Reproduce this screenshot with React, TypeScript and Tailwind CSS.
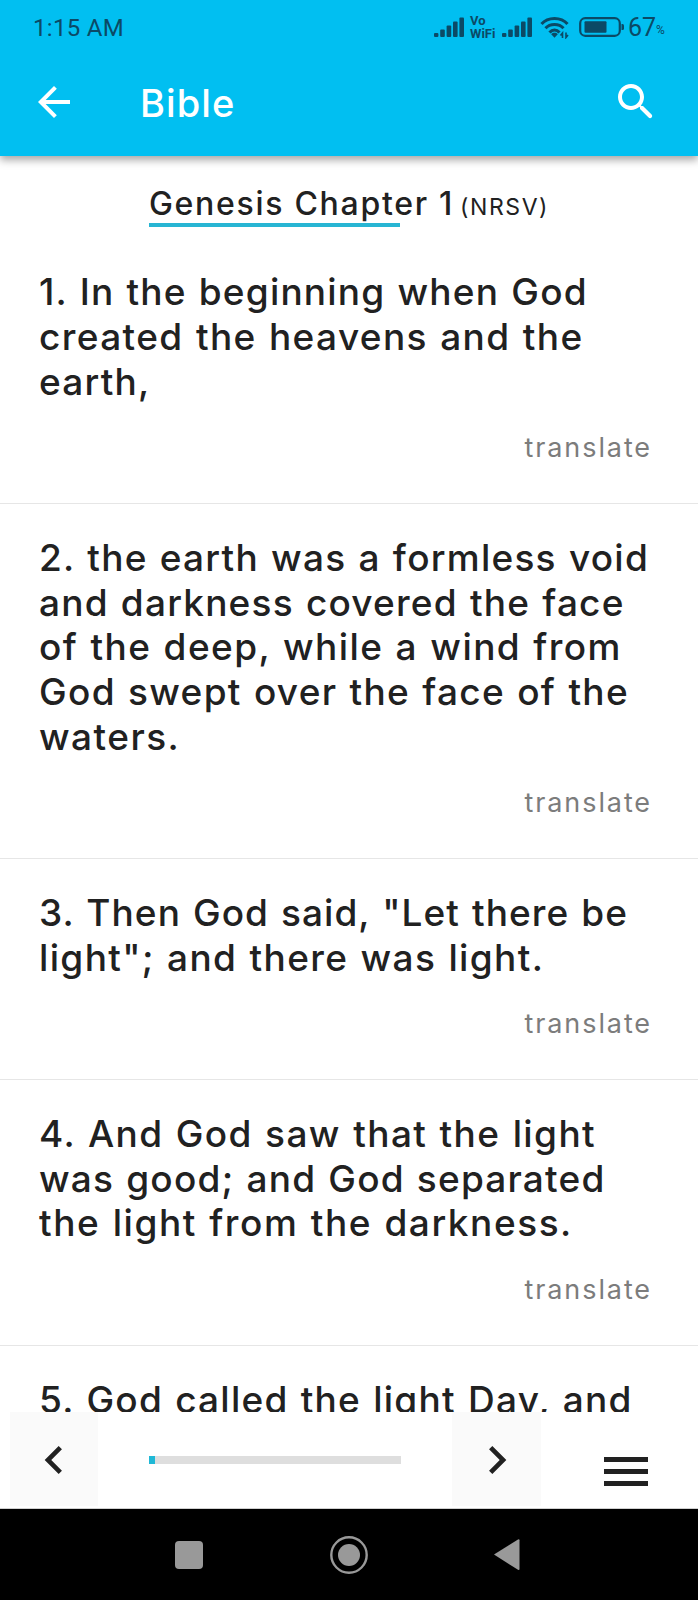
const verses = [
  {
    id: 1,
    lines: [
      { text: "1. In the beginning when God", tracking: "tracking-[1.2px]" },
      { text: "created the heavens and the", tracking: "tracking-[1.39px]" },
      { text: "earth,", tracking: "tracking-[1.2px]" },
    ],
  },
  {
    id: 2,
    lines: [
      { text: "2. the earth was a formless void", tracking: "tracking-[1.25px]" },
      { text: "and darkness covered the face", tracking: "tracking-[1.21px]" },
      { text: "of the deep, while a wind from", tracking: "tracking-[1.41px]" },
      { text: "God swept over the face of the", tracking: "tracking-[1.31px]" },
      { text: "waters.", tracking: "tracking-[1.44px]" },
    ],
  },
  {
    id: 3,
    lines: [
      { text: '3. Then God said, "Let there be', tracking: "tracking-[1.07px]" },
      { text: 'light"; and there was light.', tracking: "tracking-[1.36px]" },
    ],
  },
  {
    id: 4,
    lines: [
      { text: "4. And God saw that the light", tracking: "tracking-[1.4px]" },
      { text: "was good; and God separated", tracking: "tracking-[1.2px]" },
      { text: "the light from the darkness.", tracking: "tracking-[1.55px]" },
    ],
  },
  {
    id: 5,
    lines: [{ text: "5. God called the light Day, and", tracking: "tracking-[1.25px]" }],
  },
];

type Line = { text: string; tracking: string };

function SignalIcon() {
  return (
    <svg width="30" height="20" viewBox="0 0 30 20" fill="currentColor">
      <rect x="0" y="16" width="4.4" height="4" rx="1" />
      <rect x="6.2" y="12.5" width="4.6" height="7.5" rx="1" />
      <rect x="12.6" y="8.5" width="4.6" height="11.5" rx="1" />
      <rect x="19" y="4.5" width="4.6" height="15.5" rx="1" />
      <rect x="25.4" y="0.5" width="4.6" height="19.5" rx="1" />
    </svg>
  );
}

function WifiIcon() {
  return (
    <svg width="30" height="23" viewBox="0 0 30 23" fill="none" stroke="currentColor" strokeWidth="3">
      <path d="M1.5 8 C8 0.5 21 0.5 27.5 8" />
      <path d="M5.5 12.3 C10 7.2 19 7.2 23.5 12.3" />
      <path d="M9.5 16.5 C12.5 13 16.5 13 19.5 16.5" />
      <path d="M11.2 18.2 C13 16.3 16 16.3 17.8 18.2 L14.5 21.8 Z" fill="currentColor" stroke="none" />
      <path d="M22.5 22 V17 L20.5 19.5 M26 16.5 V21.5 L28 19" strokeWidth="1.6" />
    </svg>
  );
}

function BatteryIcon() {
  return (
    <svg width="46" height="20" viewBox="0 0 46 20" fill="none">
      <rect x="1.2" y="1.2" width="39.6" height="17.6" rx="5" stroke="currentColor" strokeWidth="2.2" />
      <rect x="5.5" y="4.2" width="22" height="11.6" rx="1" fill="currentColor" />
      <path d="M42.5 7 h1 q1.5 0 1.5 1.5 v3 q0 1.5 -1.5 1.5 h-1 z" fill="currentColor" />
    </svg>
  );
}

function StatusBar() {
  return (
    <div className="flex h-[54px] items-center pl-[33px] font-[Roboto,sans-serif] text-[#0b4a66]">
      <span className="w-[401px] pt-px text-[24px] leading-none tracking-[0.3px]">1:15 AM</span>
      <SignalIcon />
      <span className="ml-[6px] w-[28px] text-[13px] font-bold leading-[13px]">
        Vo
        <br />
        WiFi
      </span>
      <div className="ml-[4px]">
        <SignalIcon />
      </div>
      <div className="ml-[8px]">
        <WifiIcon />
      </div>
      <div className="ml-[9px]">
        <BatteryIcon />
      </div>
      <span className="ml-[3px] pt-px text-[25px] leading-none">67</span>
      <span className="pt-[6px] text-[12px] leading-none">%</span>
    </div>
  );
}

function AppBar() {
  return (
    <header className="relative z-10 h-[156px] shrink-0 bg-[#01bff1] shadow-[0_4px_8px_rgba(0,0,0,0.35)]">
      <StatusBar />
      <div className="flex h-24 items-center pl-[30px] pr-[38px] text-white">
        <button aria-label="Back">
          <svg width="48" height="48" viewBox="0 0 24 24" fill="currentColor">
            <path d="M20 11H7.83l5.59-5.59L12 4l-8 8 8 8 1.41-1.41L7.83 13H20v-2z" />
          </svg>
        </button>
        <h1 className="ml-[62px] mt-[2px] text-[38px] font-medium tracking-[1.1px]">Bible</h1>
        <button aria-label="Search" className="ml-auto">
          <svg width="48" height="48" viewBox="0 0 24 24" fill="currentColor">
            <path d="M15.5 14h-.79l-.28-.27C15.41 12.59 16 11.11 16 9.5 16 5.91 13.09 3 9.5 3S3 5.91 3 9.5 5.91 16 9.5 16c1.61 0 3.09-.59 4.23-1.57l.27.28v.79l4.3 4.29c.41.41 1.08.41 1.49 0s.41-1.08 0-1.49L15.5 14zm-6 0C7.01 14 5 11.99 5 9.5S7.01 5 9.5 5 14 7.01 14 9.5 11.99 14 9.5 14z" />
          </svg>
        </button>
      </div>
    </header>
  );
}

function ChapterTitle() {
  return (
    <div className="h-[82.2px] shrink-0 pl-[149px] pt-[27px]">
      <h2 className="flex h-[40px] items-baseline whitespace-nowrap">
        <span className="text-[32px] font-medium leading-[41px] tracking-[1.7px]">Genesis Chapter 1</span>
        <span className="ml-[6px] text-[23px] tracking-[1.6px]">(NRSV)</span>
      </h2>
      <div className="h-1 w-[251px] bg-[#27b5d3]" />
    </div>
  );
}

function Verse({ lines }: { lines: Line[] }) {
  return (
    <article className="border-b border-[#e6e6e6] pl-[39px] pr-[47px] pt-[32px]">
      <p className="whitespace-nowrap text-[37px] font-medium leading-[44.7px] [word-spacing:1px]">
        {lines.map((line) => (
          <span key={line.text} className={`block ${line.tracking}`}>
            {line.text}
          </span>
        ))}
      </p>
      <div className="flex h-[98.6px] justify-end pt-[27.5px]">
        <button className="-mr-px h-[32px] text-[27px] leading-[32px] tracking-[1.9px] text-[#7c7c7c]">
          translate
        </button>
      </div>
    </article>
  );
}

function ReaderControls() {
  return (
    <footer className="flex h-[97px] shrink-0 items-start border-b border-[#cfcfcf] bg-white pl-[10px]">
      <button aria-label="Previous" className="flex h-[94px] w-[88px] items-center justify-center bg-[#fafafa] pt-[2px]">
        <svg width="56" height="56" viewBox="0 0 24 24" fill="currentColor">
          <path d="M15.41 7.41L14 6l-6 6 6 6 1.41-1.41L10.83 12z" />
        </svg>
      </button>
      <div className="ml-[51px] mt-[44px] h-2 w-[252px] bg-[#dedede]">
        <div className="h-2 w-[6px] bg-[#1fb8d6]" />
      </div>
      <button aria-label="Next" className="ml-[51px] flex h-[94px] w-[89px] items-center justify-center bg-[#fafafa] pt-[2px]">
        <svg width="56" height="56" viewBox="0 0 24 24" fill="currentColor">
          <path d="M10 6L8.59 7.41 13.17 12l-4.58 4.59L10 18l6-6z" />
        </svg>
      </button>
      <button aria-label="Menu" className="ml-[63px] mt-[45px] flex w-[44px] flex-col gap-[7px]">
        <span className="h-[5px] bg-[#212121]" />
        <span className="h-[5px] bg-[#212121]" />
        <span className="h-[5px] bg-[#212121]" />
      </button>
    </footer>
  );
}

function SystemNav() {
  return (
    <nav className="flex h-[91px] shrink-0 items-center bg-black pl-[175px] text-[#999]">
      <div className="h-7 w-7 rounded-[4px] bg-[#999]" />
      <svg className="ml-[126px]" width="40" height="40" viewBox="0 0 40 40">
        <circle cx="20" cy="20" r="17.7" fill="none" stroke="currentColor" strokeWidth="2.4" />
        <circle cx="20" cy="20" r="11" fill="currentColor" />
      </svg>
      <svg className="ml-[124px]" width="28" height="34" viewBox="0 0 28 34">
        <path d="M1 16.5 L25 1.5 Q26.5 1 26.5 2.2 V31 Q26.5 32.4 25 31.8 Z" fill="currentColor" />
      </svg>
    </nav>
  );
}

export default function App() {
  return (
    <div className="flex h-[1600px] w-[698px] flex-col overflow-hidden bg-white font-[Inter,sans-serif] text-[#212121]">
      <AppBar />
      <main className="flex min-h-0 flex-1 flex-col overflow-hidden">
        <ChapterTitle />
        {verses.map((verse) => (
          <Verse key={verse.id} lines={verse.lines} />
        ))}
      </main>
      <ReaderControls />
      <SystemNav />
    </div>
  );
}
